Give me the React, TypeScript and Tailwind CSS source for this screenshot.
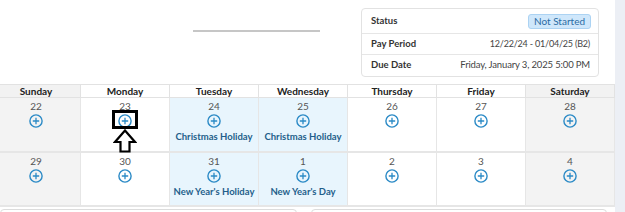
import React from "react";

const font = { fontFamily: 'Lato, "Noto Sans", sans-serif' };

function Plus() {
  return (
    <svg width="14" height="14" viewBox="0 0 14 14" className="block">
      <circle cx="7" cy="7" r="6.1" fill="none" stroke="#2b8ac6" strokeWidth="1.4" />
      <path d="M7 3.8v6.4M3.8 7h6.4" stroke="#2b8ac6" strokeWidth="1.3" />
    </svg>
  );
}

type Day = { n: string; kind: "weekend" | "holiday" | "normal"; label?: string; mark?: boolean };

const weeks: Day[][] = [
  [
    { n: "22", kind: "weekend" },
    { n: "23", kind: "normal", mark: true },
    { n: "24", kind: "holiday", label: "Christmas Holiday" },
    { n: "25", kind: "holiday", label: "Christmas Holiday" },
    { n: "26", kind: "normal" },
    { n: "27", kind: "normal" },
    { n: "28", kind: "weekend" },
  ],
  [
    { n: "29", kind: "weekend" },
    { n: "30", kind: "normal" },
    { n: "31", kind: "holiday", label: "New Year's Holiday" },
    { n: "1", kind: "holiday", label: "New Year's Day" },
    { n: "2", kind: "normal" },
    { n: "3", kind: "normal" },
    { n: "4", kind: "weekend" },
  ],
];

const days = ["Sunday", "Monday", "Tuesday", "Wednesday", "Thursday", "Friday", "Saturday"];

export default function App() {
  return (
    <div className="w-[625px] h-[212px] flex overflow-hidden bg-white text-[9.5px]" style={font}>
      <div className="w-[615px] flex flex-col">
        <div className="h-[84px] shrink-0 flex">
          <div className="ml-[193px] mt-[30px] w-[127px] h-[2px] bg-[#c6c6c6]" />
          <div className="ml-[41px] mt-[8px] w-[238px] h-[69px] border border-[#e2e2e2] rounded-[4px] flex flex-col">
            <div className="h-[25px] flex items-center justify-between pl-[9px] pr-[7px] border-b border-[#e6e6e6]">
              <span className="font-bold text-[#333]">Status</span>
              <span className="h-[15px] w-[63px] flex items-center justify-center bg-[#cfe7fb] border border-[#acd3f3] rounded-[3px] text-[#2b6ca3] text-[10px] leading-none">
                Not Started
              </span>
            </div>
            <div className="h-[21px] flex items-center justify-between pl-[9px] pr-[8px] border-b border-[#e6e6e6]">
              <span className="font-bold text-[#333]">Pay Period</span>
              <span className="text-[#444] text-[9px] tracking-[-0.2px]">12/22/24 - 01/04/25 (B2)</span>
            </div>
            <div className="flex-1 flex items-center justify-between pl-[9px] pr-[8px]">
              <span className="font-bold text-[#333]">Due Date</span>
              <span className="text-[#444] tracking-[-0.15px]">Friday, January 3, 2025 5:00 PM</span>
            </div>
          </div>
        </div>
        <div className="ml-[-8px] w-[623px] shrink-0 grid grid-cols-7">
          {days.map((d, i) => (
            <div
              key={d}
              className={`h-[14px] leading-[13px] text-center font-bold text-[10px] text-[#222] border-t border-b border-r border-[#e2e2e2] ${
                i === 0 || i === 6 ? "bg-[#f2f2f2]" : "bg-white"
              }`}
            >
              {d}
            </div>
          ))}
          {weeks.map((w, wi) =>
            w.map((d, di) => (
              <div
                key={`${wi}-${di}`}
                className={`${wi === 0 ? "h-[55px]" : "h-[54px]"} flex flex-col items-center border-r border-b-2 border-[#e6e6e6] ${
                  d.kind === "weekend" ? "bg-[#f3f3f3]" : d.kind === "holiday" ? "bg-[#e8f5fd]" : "bg-white"
                }`}
              >
                <div className="leading-[14px] pt-[1px] text-[10px] text-[#555]">{d.n}</div>
                <div className="relative mt-[1px]">
                  <Plus />
                  {d.mark && (
                    <>
                      <div className="absolute left-[-6px] top-[-4px] w-[26px] h-[19px] border-[3px] border-black" />
                      <svg
                        className="absolute left-[-5px] top-[15px]"
                        width="24"
                        height="24"
                        viewBox="0 0 24 24"
                      >
                        <path
                          d="M12 1.5 L22 13 L16.5 13 L16.5 22.5 L7.5 22.5 L7.5 13 L2 13 Z"
                          fill="white"
                          stroke="black"
                          strokeWidth="2.2"
                          strokeLinejoin="miter"
                        />
                      </svg>
                    </>
                  )}
                </div>
                {d.label && (
                  <div className="mt-[2px] leading-[14px] font-bold text-[#1f5f8b] whitespace-nowrap">{d.label}</div>
                )}
              </div>
            ))
          )}
        </div>
        <div className="flex mt-[2px] shrink-0">
          <div className="w-[297px] h-[12px] border border-[#dcdcdc] rounded-t-[4px]" />
          <div className="ml-[14px] w-[296px] h-[12px] border border-[#dcdcdc] rounded-t-[4px]" />
        </div>
      </div>
      <div className="w-[10px] bg-[#eceff5]" />
    </div>
  );
}
